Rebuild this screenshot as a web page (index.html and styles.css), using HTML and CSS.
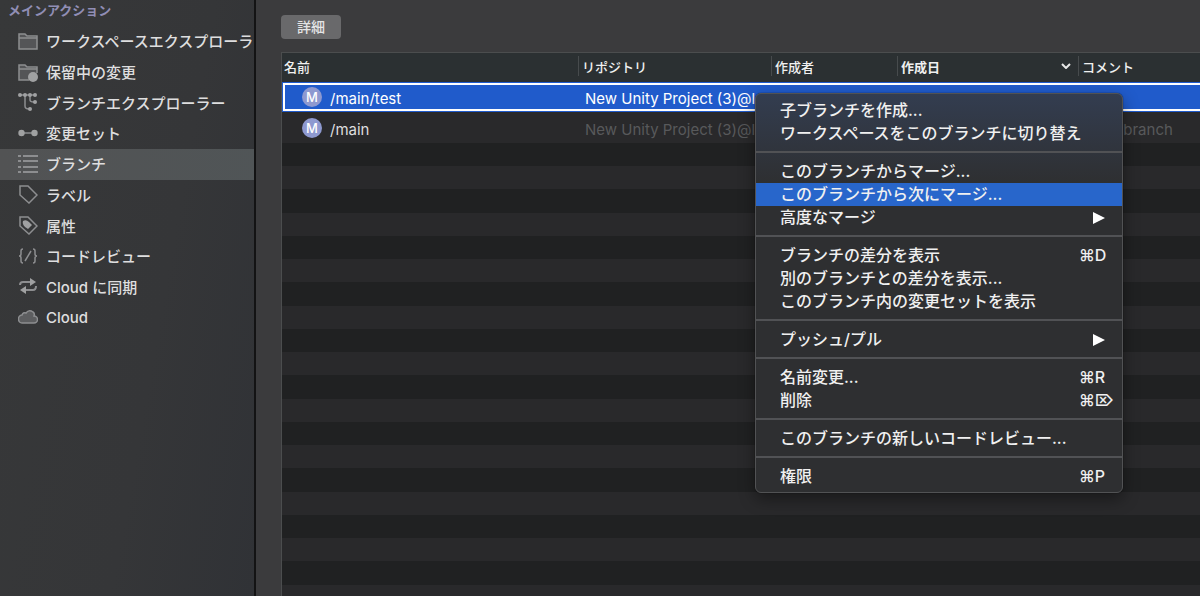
FILE: index.html
```
<!DOCTYPE html>
<html lang="ja">
<head>
  <meta charset="utf-8">
  <title>ブランチ</title>
  <link rel="stylesheet" href="styles.css">
</head>
<body>
  <nav class="sidebar">
    <h2>メインアクション</h2>
    <ul>
      <li><a href="#">
        <svg viewBox="0 0 20 20"><path class="shade" d="M1 3h6l2 3h10v12H1z"/><path d="M1 3h6l2 2h10v13H1zM1 7h18"/></svg>
        ワークスペースエクスプローラー</a></li>
      <li><a href="#">
        <svg viewBox="0 0 20 20"><path class="shade" d="M1 3h6l2 3h10v12H1z"/><path d="M11 18H1V3h6l2 2h10v6M1 7h18"/><circle class="solid" cx="15" cy="15" r="5"/></svg>
        保留中の変更</a></li>
      <li><a href="#">
        <svg viewBox="0 0 20 20"><path d="M2 3h15M7 3v11q0 3 4 3M12 3v5q0 2 4 2"/><g class="solid"><circle cx="2" cy="3" r="2"/><circle cx="7" cy="3" r="2"/><circle cx="12" cy="3" r="2"/><circle cx="17" cy="3" r="2"/><circle cx="17" cy="10" r="2"/><circle cx="12" cy="17" r="2"/></g></svg>
        ブランチエクスプローラー</a></li>
      <li><a href="#">
        <svg viewBox="0 0 20 20"><path d="M4 10h12"/><circle class="solid" cx="3.5" cy="10" r="3.2"/><circle class="solid" cx="16.5" cy="10" r="3.2"/></svg>
        変更セット</a></li>
      <li><a href="#" class="current">
        <svg viewBox="0 0 20 20"><path class="thick" d="M0 2h3M5 2h15M0 7h3M5 7h15M0 13h3M5 13h15M0 18h3M5 18h15"/></svg>
        ブランチ</a></li>
      <li><a href="#">
        <svg viewBox="0 0 20 20"><path d="M2 2h8l9 9-8 8-9-8z"/></svg>
        ラベル</a></li>
      <li><a href="#">
        <svg viewBox="0 0 20 20"><path d="M2 2h8l9 9-8 8-9-8z"/><path class="solid" d="M5 6q3-2 6 1l3 3-4 4-3-2q-3-3-2-6z"/></svg>
        属性</a></li>
      <li><a href="#">
        <svg viewBox="0 0 20 20"><path d="M5 3q-2 0-2 2v3q0 2-2 2 2 0 2 2v3q0 2 2 2M15 3q2 0 2 2v3q0 2 2 2-2 0-2 2v3q0 2-2 2M13 5l-6 10"/></svg>
        コードレビュー</a></li>
      <li><a href="#">
        <svg viewBox="0 0 20 20"><path class="thick" d="M2 9q0-3 3-3h9M18 10q0 4-3 4H6"/><path class="solid" d="M12 2l6 4-6 4zM8 10l-6 4 6 4z"/></svg>
        Cloud に同期</a></li>
      <li><a href="#">
        <svg viewBox="0 0 20 20"><path class="cloud" d="M5 16a4 4 0 0 1-1-8q1-3 4-2 3-4 7-1 2 1 1 4a3.500 3.500 0 0 1 0 7z"/></svg>
        Cloud</a></li>
    </ul>
  </nav>

  <main>
    <button class="details">詳細</button>
    <div class="list">
      <table>
        <colgroup>
          <col class="col-name">
          <col class="col-repo">
          <col class="col-owner">
          <col class="col-date">
          <col>
        </colgroup>
        <thead>
          <tr>
            <th><span>名前</span></th>
            <th><span>リポジトリ</span></th>
            <th><span>作成者</span></th>
            <th class="sorted"><span>作成日<svg viewBox="0 0 10 6"><path d="M1 1l4 4 4-4"/></svg></span></th>
            <th><span>コメント</span></th>
          </tr>
        </thead>
        <tbody>
          <tr class="selected">
            <td><div class="branch"><i class="badge">M</i>/main/test</div></td>
            <td>New Unity Project (3)@l...</td>
            <td></td>
            <td></td>
            <td></td>
          </tr>
          <tr>
            <td><div class="branch"><i class="badge">M</i>/main</div></td>
            <td>New Unity Project (3)@l...</td>
            <td></td>
            <td></td>
            <td>main branch</td>
          </tr>
        </tbody>
      </table>
      <div class="stripes"></div>
    </div>
  </main>

  <div class="menu" role="menu">
    <button role="menuitem">子ブランチを作成...</button>
    <button role="menuitem">ワークスペースをこのブランチに切り替え</button>
    <hr>
    <button role="menuitem">このブランチからマージ...</button>
    <button role="menuitem" class="active">このブランチから次にマージ...</button>
    <button role="menuitem">高度なマージ<svg class="arrow" viewBox="0 0 12 12"><path d="M0 0l12 6-12 6z"/></svg></button>
    <hr>
    <button role="menuitem">ブランチの差分を表示<kbd>⌘D</kbd></button>
    <button role="menuitem">別のブランチとの差分を表示...</button>
    <button role="menuitem">このブランチ内の変更セットを表示</button>
    <hr>
    <button role="menuitem">プッシュ/プル<svg class="arrow" viewBox="0 0 12 12"><path d="M0 0l12 6-12 6z"/></svg></button>
    <hr>
    <button role="menuitem">名前変更...<kbd>⌘R</kbd></button>
    <button role="menuitem">削除<kbd>⌘⌦</kbd></button>
    <hr>
    <button role="menuitem">このブランチの新しいコードレビュー...</button>
    <hr>
    <button role="menuitem">権限<kbd>⌘P</kbd></button>
  </div>
</body>
</html>
```
FILE: styles.css
```
* {
  box-sizing: border-box;
}
body {
  margin: 0;
  display: flex;
  height: 100vh;
  overflow: hidden;
  background: #3b3b3d;
  color: #e4e4e5;
  font-family: Inter, "Noto Sans CJK JP", sans-serif;
  font-size: 15px;
}
button {
  border: 0;
  color: inherit;
  font: inherit;
}

/* sidebar */
.sidebar {
  flex: none;
  width: 256px;
  overflow: hidden;
  border-right: 2px solid #131314;
  background: linear-gradient(100deg, #373839, #353638 60%, #303236);
}
.sidebar h2 {
  margin: 0;
  padding: 0 8px;
  height: 26px;
  line-height: 20px;
  font-size: 13px;
  font-weight: 700;
  color: #918eb5;
}
.sidebar ul {
  display: grid;
  grid-auto-rows: 1fr;
  height: 307px;
  margin: 0;
  padding: 0;
  list-style: none;
}
.sidebar a {
  display: flex;
  align-items: center;
  gap: 8px;
  height: 100%;
  padding: 0 0 1px 18px;
  font-weight: 500;
  color: #dededf;
  text-decoration: none;
  white-space: nowrap;
}
.sidebar .current {
  background: linear-gradient(90deg, #525354, #505557);
}
.sidebar svg {
  flex: none;
  width: 20px;
  height: 20px;
  fill: none;
  stroke: #8d8e90;
  stroke-width: 1.5;
}
.sidebar .solid {
  fill: #a0a1a2;
  stroke: none;
}
.sidebar .shade {
  fill: #545557;
  stroke: none;
}
.sidebar .thick {
  stroke-width: 2;
}
.sidebar .cloud {
  fill: #5d5e60;
}

/* branch list */
main {
  flex: 1;
  min-width: 0;
  display: flex;
  flex-direction: column;
  align-items: flex-start;
  padding: 15px 0 0 25px;
}
.details {
  width: 60px;
  height: 24px;
  padding: 0;
  margin-bottom: 13px;
  border-radius: 4px;
  background: #69696b;
  font-size: 14px;
  line-height: 24px;
  font-weight: 500;
}
.list {
  flex: 1;
  display: flex;
  flex-direction: column;
  width: 100%;
  overflow: hidden;
  border: solid #4b4d4e;
  border-width: 1px 0 0 1px;
}
table {
  width: calc(100% + 20px);
  table-layout: fixed;
  border-collapse: collapse;
}
.col-name {
  width: 296px;
}
.col-repo {
  width: 193px;
}
.col-owner {
  width: 126px;
}
.col-date {
  width: 181px;
}
thead {
  background: #2b3032;
}
th {
  height: 29px;
  padding: 0 0 3px;
  text-align: left;
  font-size: 13px;
  font-weight: 500;
  color: #f0f0f0;
}
th span {
  display: flex;
  align-items: center;
  justify-content: space-between;
  height: 20px;
  padding: 0 7px 0 3px;
  border-left: 1px solid #474b4d;
}
th:first-child span {
  padding-left: 2px;
  border: 0;
}
th.sorted {
  font-weight: 700;
}
th svg {
  width: 10px;
  height: 6px;
  fill: none;
  stroke: #e8e8e8;
  stroke-width: 2;
}
td {
  height: 31px;
  padding: 3px 7px 0;
  overflow: hidden;
  white-space: nowrap;
  color: #58595b;
}
tbody tr {
  background: #29292b;
}
tbody .selected {
  background: #205bcb;
  outline: 2px solid #fff;
  outline-offset: -3px;
}
.selected td {
  height: 30px;
  padding-top: 2px;
  color: #fff;
}
.branch {
  display: flex;
  align-items: center;
  gap: 8px;
  padding-left: 13px;
  color: #dededf;
}
.selected .branch {
  color: #fff;
}
.badge {
  width: 20px;
  height: 20px;
  margin-bottom: 3px;
  border-radius: 50%;
  background: #8e99d0;
  color: #fff;
  font-size: 13px;
  font-style: normal;
  font-weight: 500;
  line-height: 20px;
  text-align: center;
}
.stripes {
  flex: 1;
  background: linear-gradient(#202122 25%, #29292b 25% 50%, #202122 50% 75%, #29292b 75%) 0 0 / 100% 93px;
}

/* context menu */
.menu {
  position: absolute;
  top: 93px;
  left: 755px;
  width: 368px;
  padding: 5px 0 4px;
  border: 1px solid #515254;
  border-radius: 6px;
  background: linear-gradient(#333d50, #2e2f31 90px);
  box-shadow: 0 0 1px #000, 0 6px 16px rgba(0, 0, 0, 0.4);
  color: #f0f0f0;
  font-size: 16px;
  font-weight: 500;
}
.menu button {
  display: grid;
  grid-template-columns: 1fr 43px;
  align-items: center;
  width: 100%;
  height: 23px;
  padding: 0 0 0 24px;
  background: none;
  line-height: 23px;
  text-align: left;
  white-space: nowrap;
}
.menu .active {
  background: #2866cb;
}
.menu hr {
  height: 2px;
  margin: 6px 0 7px;
  border: 0;
  background: #515255;
}
.menu kbd {
  font: inherit;
}
.arrow {
  width: 12px;
  height: 12px;
  margin-left: 14px;
  fill: #fff;
}
```
